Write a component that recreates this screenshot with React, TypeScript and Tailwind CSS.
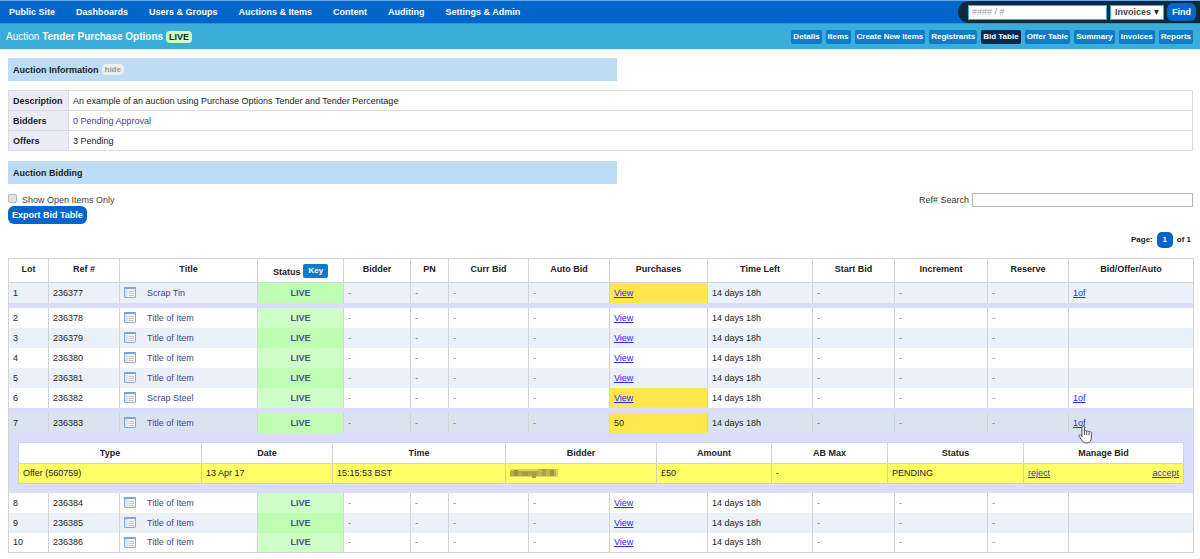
import React from "react";

interface Lot {
  lot: number;
  refNo: string;
  title: string;
  purchases: string;
  highlight?: boolean;
  bids?: boolean;
  open?: boolean;
}

const lots: Lot[] = [
  { lot: 1, refNo: "236377", title: "Scrap Tin", purchases: "View", highlight: true, bids: true },
  { lot: 2, refNo: "236378", title: "Title of Item", purchases: "View" },
  { lot: 3, refNo: "236379", title: "Title of Item", purchases: "View" },
  { lot: 4, refNo: "236380", title: "Title of Item", purchases: "View" },
  { lot: 5, refNo: "236381", title: "Title of Item", purchases: "View" },
  { lot: 6, refNo: "236382", title: "Scrap Steel", purchases: "View", highlight: true, bids: true },
  { lot: 7, refNo: "236383", title: "Title of Item", purchases: "50", highlight: true, bids: true, open: true },
  { lot: 8, refNo: "236384", title: "Title of Item", purchases: "View" },
  { lot: 9, refNo: "236385", title: "Title of Item", purchases: "View" },
  { lot: 10, refNo: "236386", title: "Title of Item", purchases: "View" },
];

const menu = ["Public Site", "Dashboards", "Users & Groups", "Auctions & Items", "Content", "Auditing", "Settings & Admin"];

const tabs = ["Details", "Items", "Create New Items", "Registrants", "Bid Table", "Offer Table", "Summary", "Invoices", "Reports"];

// relative widths, the fixed table layout shares out what is left over
const columns = [
  { name: "Lot", width: "w-[40px]" },
  { name: "Ref #", width: "w-[71px]" },
  { name: "Title", width: "w-[138px]" },
  { name: "Status", width: "w-[86px]" },
  { name: "Bidder", width: "w-[67px]" },
  { name: "PN", width: "w-[38px]" },
  { name: "Curr Bid", width: "w-[80px]" },
  { name: "Auto Bid", width: "w-[81px]" },
  { name: "Purchases", width: "w-[98px]" },
  { name: "Time Left", width: "w-[105px]" },
  { name: "Start Bid", width: "w-[82px]" },
  { name: "Increment", width: "w-[93px]" },
  { name: "Reserve", width: "w-[81px]" },
  { name: "Bid/Offer/Auto", width: "w-[125px]" },
];

const offerColumns = [
  { name: "Type", width: "w-[183px]" },
  { name: "Date", width: "w-[131px]" },
  { name: "Time", width: "w-[173px]" },
  { name: "Bidder", width: "w-[151px]" },
  { name: "Amount", width: "w-[115px]" },
  { name: "AB Max", width: "w-[116px]" },
  { name: "Status", width: "w-[136px]" },
  { name: "Manage Bid", width: "w-[160px]" },
];

const ItemIcon: React.FC = () => (
  <svg width="12" height="11" viewBox="0 0 12 11" aria-hidden="true" className="shrink-0">
    <rect x="0.5" y="0.5" width="11" height="10" rx="0.5" fill="#f6f6f6" stroke="#8aaedb" />
    <rect x="0" y="0" width="12" height="2" rx="0.5" fill="#7ea6dc" />
    <rect x="1" y="2" width="2.500" height="8" fill="#cfe3f8" />
    <path d="M4.500 4.500h5.500M4.500 6.500h5.500M4.500 8.500h5.500" stroke="#c8c8c8" />
  </svg>
);

const HandCursor: React.FC = () => (
  <svg width="15" height="19" viewBox="0 0 15 19" aria-hidden="true" className="pointer-events-none absolute left-[5px] top-[8px] z-10">
    <path
      d="M4 11.5V2.2c0-1.9 2.4-1.9 2.4 0v4.3c.2-1.3 2.2-1.2 2.3.2.3-1.1 2.2-.9 2.3.5.4-.9 2.4-.7 2.4 1v4.3c0 2.8-1.3 5.5-4.3 5.5H7.800c-1.500 0-2.500-.7-3.400-2.100L1.200 11.600c-.9-1.500.7-2.500 1.700-1.500z"
      fill="#fff"
      stroke="#4b4b5c"
      strokeLinejoin="round"
    />
    <path d="M6.400 6.500v3.500M8.700 7v3M11 7.500V10" stroke="#4b4b5c" fill="none" />
  </svg>
);

const SectionTitle: React.FC<{ title: string; children?: React.ReactNode }> = ({ title, children }) => (
  <h2 className="flex h-[23px] w-[51.4%] items-center gap-[3px] bg-[#bdddf7] px-[5px] font-bold text-[#222]">
    {title}
    {children}
  </h2>
);

const OfferPanel: React.FC = () => (
  <table className="w-full table-fixed border-collapse bg-white">
    <thead>
      <tr className="h-[21px]">
        {offerColumns.map((c) => (
          <th key={c.name} className={`${c.width} border border-[#d3d3d3] p-0 text-center`}>
            {c.name}
          </th>
        ))}
      </tr>
    </thead>
    <tbody>
      <tr className="h-5 bg-[#ffff66] [&>td]:border [&>td]:border-[#d3d3a8] [&>td]:px-1 [&>td]:py-0">
        <td>Offer (560759)</td>
        <td>13 Apr 17</td>
        <td>15:15:53 BST</td>
        <td>
          <Redacted />
        </td>
        <td>£50</td>
        <td>-</td>
        <td>PENDING</td>
        <td>
          <div className="flex justify-between text-[#3a3ab0] underline">
            <a href="#reject">reject</a>
            <a href="#accept">accept</a>
          </div>
        </td>
      </tr>
    </tbody>
  </table>
);

const Redacted: React.FC = () => (
  <svg width="50" height="10" viewBox="0 0 50 10" role="img" aria-label="Bidder hidden" className="block">
    <rect x="0" y="1" width="48" height="8" fill="#d6d45c" />
    <rect x="0" y="3" width="28" height="5" fill="#b3a94d" />
    <rect x="28" y="1" width="18" height="7" fill="#bdb655" />
    <rect x="4" y="2" width="4" height="6" fill="#9c9440" />
    <rect x="12" y="4" width="6" height="4" fill="#a39a45" />
    <rect x="22" y="4" width="4" height="6" fill="#a8a044" />
    <rect x="32" y="1" width="4" height="7" fill="#a8a24a" />
    <rect x="40" y="2" width="4" height="6" fill="#b08f4c" />
  </svg>
);

const LotRow: React.FC<{ item: Lot }> = ({ item }) => {
  const odd = item.lot % 2 === 1;
  const rowColor = item.open ? "bg-[#d9e4f0]" : odd ? "bg-[#ebf1f8]" : "bg-white";
  return (
    <tr className={`h-5 ${rowColor} [&>td]:border-x [&>td]:border-[#d3d3d3] [&>td]:px-1 [&>td]:py-0`}>
      <td>{item.lot}</td>
      <td>{item.refNo}</td>
      <td>
        <a href="#item" className="flex items-center gap-[11px] text-[#444488]">
          <ItemIcon />
          {item.title}
        </a>
      </td>
      <td className={`text-center font-bold text-[#3b5688] ${odd ? "bg-[#bfffb3]" : "bg-[#cfffc6]"}`}>LIVE</td>
      <Blank />
      <Blank />
      <Blank />
      <Blank />
      <td className={item.highlight ? "bg-[#ffe74c]" : ""}>
        {item.purchases === "View" ? (
          <a href="#view" className="text-[#2a2aff] underline">
            View
          </a>
        ) : (
          item.purchases
        )}
      </td>
      <td>14 days 18h</td>
      <Blank />
      <Blank />
      <Blank />
      <td>
        {item.bids && (
          <span className="relative inline-block">
            <a href="#bids" className="text-[#2a2aff] underline">
              1of
            </a>
            {item.open && <HandCursor />}
          </span>
        )}
      </td>
    </tr>
  );
};

const Blank: React.FC = () => <td className="text-[#777]">-</td>;

const Spacer: React.FC = () => (
  <tr className="h-[5px] bg-[#dcdcff]">
    <td colSpan={14} className="border-x border-[#d3d3d3] p-0"></td>
  </tr>
);

export default function App() {
  return (
    <div className="bg-white pb-1.5 font-['Liberation_Sans',Arial,sans-serif] text-[9px] leading-3 text-[#222]">
      <header>
        <div className="flex h-[23px] justify-between border-t border-[#66a9e3] bg-[#0066cc]">
          <nav className="flex items-center gap-[21px] pl-[9px] font-bold text-white">
            {menu.map((m) => (
              <a key={m} href="#menu">
                {m}
              </a>
            ))}
          </nav>
          <form className="flex items-center gap-[3px] rounded-l-full bg-[#0b2a3c] pl-2.5 pr-1">
            <input
              aria-label="Number"
              placeholder="#### / #"
              className="h-[15px] w-[139px] border border-[#3badd9] bg-white px-[3px] placeholder:text-[#999]"
            />
            <div className="relative">
              <select
                aria-label="Search in"
                className="block h-[15px] w-[54px] appearance-none border border-[#3badd9] bg-white pl-1 font-bold leading-[13px] text-[#444]"
              >
                <option>Invoices</option>
              </select>
              <svg width="5" height="5" viewBox="0 0 5 5" aria-hidden="true" className="pointer-events-none absolute right-[5px] top-[5px]">
                <path d="M0 0h5L2.500 5z" fill="#333" />
              </svg>
            </div>
            <button type="button" className="h-[18px] rounded-md bg-[#0066cc] px-[5px] font-bold text-white">
              Find
            </button>
          </form>
        </div>
        <div className="flex h-[26px] items-center justify-between border-t border-[#2b95d6] bg-[#3badd9] pl-1.5 pr-[7px] text-white">
          <h1 className="flex items-center gap-[3px] text-[10px]">
            <span>
              Auction <b>Tender Purchase Options</b>
            </span>
            <span className="rounded-[4px] bg-[#cfffc6] px-[3px] text-[9px] font-bold text-[#222]">LIVE</span>
          </h1>
          <nav className="flex gap-1 text-[8px] font-bold">
            {tabs.map((t) => (
              <a key={t} href="#tab" className={`rounded-xs px-0.5 py-px ${t === "Bid Table" ? "bg-[#05284f]" : "bg-[#0e7ccb]"}`}>
                {t}
              </a>
            ))}
          </nav>
        </div>
      </header>

      <main className="pl-2 pr-[7px] pt-[9px]">
        <SectionTitle title="Auction Information">
          <button type="button" className="rounded-[4px] bg-[#eeeeee] px-[3px] text-[8px] leading-[11px] text-[#999]">
            hide
          </button>
        </SectionTitle>

        <table className="mt-[9px] w-full border-collapse [&_td]:border [&_td]:border-[#dcdcdc] [&_td]:px-1 [&_td]:py-0 [&_th]:w-[60px] [&_th]:border [&_th]:border-[#dcdcdc] [&_th]:bg-[#ebebf7] [&_th]:px-1 [&_th]:py-0 [&_th]:text-left [&_tr]:h-[20px]">
          <tbody>
            <tr>
              <th scope="row">Description</th>
              <td>An example of an auction using Purchase Options Tender and Tender Percentage</td>
            </tr>
            <tr>
              <th scope="row">Bidders</th>
              <td>
                <a href="#bidders" className="text-[#444488]">
                  0 Pending Approval
                </a>
              </td>
            </tr>
            <tr>
              <th scope="row">Offers</th>
              <td>3 Pending</td>
            </tr>
          </tbody>
        </table>

        <div className="mt-2.5">
          <SectionTitle title="Auction Bidding" />
        </div>

        <div className="mt-[9px] flex justify-between">
          <div>
            <label className="flex h-[13px] items-end gap-[5px] text-[#444]">
              <input type="checkbox" className="mb-[3px] size-[9px] appearance-none rounded-xs border border-[#b5b5b5] bg-[#e3e3e3]" />
              Show Open Items Only
            </label>
            <button type="button" className="h-[18px] rounded-md bg-[#0066cc] px-1 font-bold text-white">
              Export Bid Table
            </button>
          </div>
          <label className="flex h-[14px] items-center gap-[3px] text-[#333]">
            Ref# Search
            <input type="text" className="h-[14px] w-[221px] border border-[#b5b5b5] bg-white px-1" />
          </label>
        </div>

        <div className="mt-2 flex items-center justify-end gap-1 pr-0.5 text-[8px] font-bold">
          Page:
          <button type="button" className="size-4 rounded-[5px] bg-[#0066cc] text-white">
            1
          </button>
          of 1
        </div>

        <table className="mt-2.5 w-full table-fixed border-collapse border border-[#d3d3d3]">
          <thead>
            <tr className="h-6">
              {columns.map((c) => (
                <th key={c.name} className={`${c.width} border border-[#d3d3d3] px-0 pb-1 pt-0 text-center`}>
                  {c.name === "Status" ? (
                    <span className="flex items-end justify-center gap-[3px] pt-1">
                      Status
                      <button type="button" className="h-[14px] rounded-xs bg-[#0e7ccb] px-[5px] text-[8px] text-white">
                        Key
                      </button>
                    </span>
                  ) : (
                    c.name
                  )}
                </th>
              ))}
            </tr>
          </thead>
          <tbody>
            {lots.map((item) => (
              <React.Fragment key={item.lot}>
                {item.open && <Spacer />}
                <LotRow item={item} />
                {item.lot === 1 && <Spacer />}
                {item.open && (
                  <tr className="bg-[#dcdcff]">
                    <td colSpan={14} className="border-x border-[#d3d3d3] px-[9px] py-[9px]">
                      <OfferPanel />
                    </td>
                  </tr>
                )}
              </React.Fragment>
            ))}
          </tbody>
        </table>
      </main>
    </div>
  );
}
